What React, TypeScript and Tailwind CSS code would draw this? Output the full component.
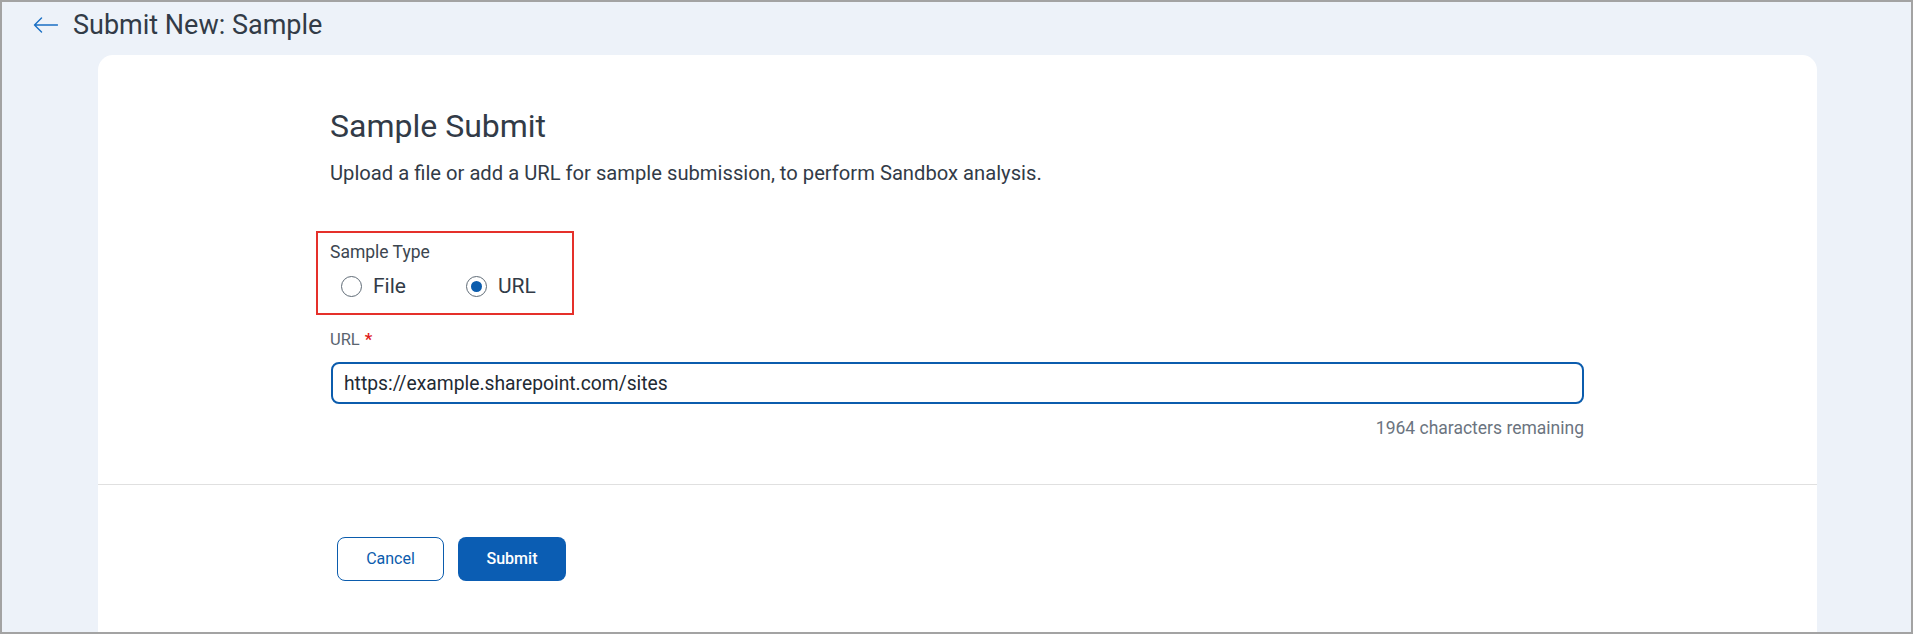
import { useState } from "react";

function BackArrow() {
  return (
    <svg width="25" height="16" viewBox="0 0 25 16" fill="none">
      <path
        d="M24.5 8H1.5M8.5 1L1.5 8L8.5 15"
        stroke="#1a6fc4"
        strokeWidth="1.4"
        strokeLinecap="round"
        strokeLinejoin="round"
      />
    </svg>
  );
}

function Radio({
  checked,
  label,
  onSelect,
}: {
  checked: boolean;
  label: string;
  onSelect: () => void;
}) {
  return (
    <button type="button" onClick={onSelect} className="flex items-center gap-[11px]">
      <span className="w-[21px] h-[21px] rounded-full border-[1.5px] border-[#5f6b76] flex items-center justify-center">
        {checked && <span className="w-[11px] h-[11px] rounded-full bg-[#0b5cad]" />}
      </span>
      <span className="text-[21px] leading-[28px] text-[#323b47]">{label}</span>
    </button>
  );
}

export default function App() {
  const [type, setType] = useState<"file" | "url">("url");
  const [url, setUrl] = useState("https://example.sharepoint.com/sites");
  const max = 2000;

  return (
    <div className="w-full h-[634px] bg-[#edf2f9] border-2 border-[#a3a3a3] flex flex-col overflow-hidden font-['Roboto',sans-serif]">
      <div className="h-[46px] flex items-center pl-[31px] gap-[15px] shrink-0">
        <BackArrow />
        <h1 className="text-[27px] leading-[32px] text-[#323b47]">Submit New: Sample</h1>
      </div>

      <div className="mt-[7px] ml-[96px] mr-[94px] flex-1 bg-white rounded-t-[15px] flex flex-col">
        <div className="pl-[232px] pt-[53px]">
          <div className="w-[1254px]">
            <h2 className="text-[32px] leading-[36px] text-[#323b47]">Sample Submit</h2>
            <p className="mt-[17px] text-[20.2px] leading-[24px] text-[#323b47]">
              Upload a file or add a URL for sample submission, to perform Sandbox analysis.
            </p>

            <div className="mt-[46px] -ml-[14px] w-[258px] border-2 border-[#e5302a] pl-[12px] pt-[9px] pb-[13px]">
              <div className="text-[17.5px] leading-[20px] text-[#3c4650]">Sample Type</div>
              <div className="mt-[10px] pl-[11px] flex items-center gap-[60px]">
                <Radio checked={type === "file"} label="File" onSelect={() => setType("file")} />
                <Radio checked={type === "url"} label="URL" onSelect={() => setType("url")} />
              </div>
            </div>

            <label className="flex items-start mt-[15px] text-[16.5px] leading-[20px] text-[#5a6470]">
              URL<span className="ml-[5px] text-[#e0201b] font-bold">*</span>
            </label>
            <input
              value={url}
              onChange={(e) => setUrl(e.target.value)}
              className="mt-[12px] ml-px w-[1253px] h-[42px] border-2 border-[#0b5cad] rounded-[8px] pl-[11px] text-[19.3px] text-[#222a33] outline-none"
            />
            <div className="mt-[14px] text-right text-[17.5px] leading-[20px] text-[#6b7480]">
              {max - url.length} characters remaining
            </div>
          </div>
        </div>

        <div className="mt-[46px] h-px bg-[#e0e0e0]" />

        <div className="pl-[239px] pt-[52px] flex gap-[14px]">
          <button className="w-[107px] h-[44px] rounded-[8px] border border-[#0b5cad] text-[16px] text-[#0b5cad]">
            Cancel
          </button>
          <button className="w-[108px] h-[44px] rounded-[8px] bg-[#0b5db3] text-[16px] font-medium text-white">
            Submit
          </button>
        </div>
      </div>
    </div>
  );
}
